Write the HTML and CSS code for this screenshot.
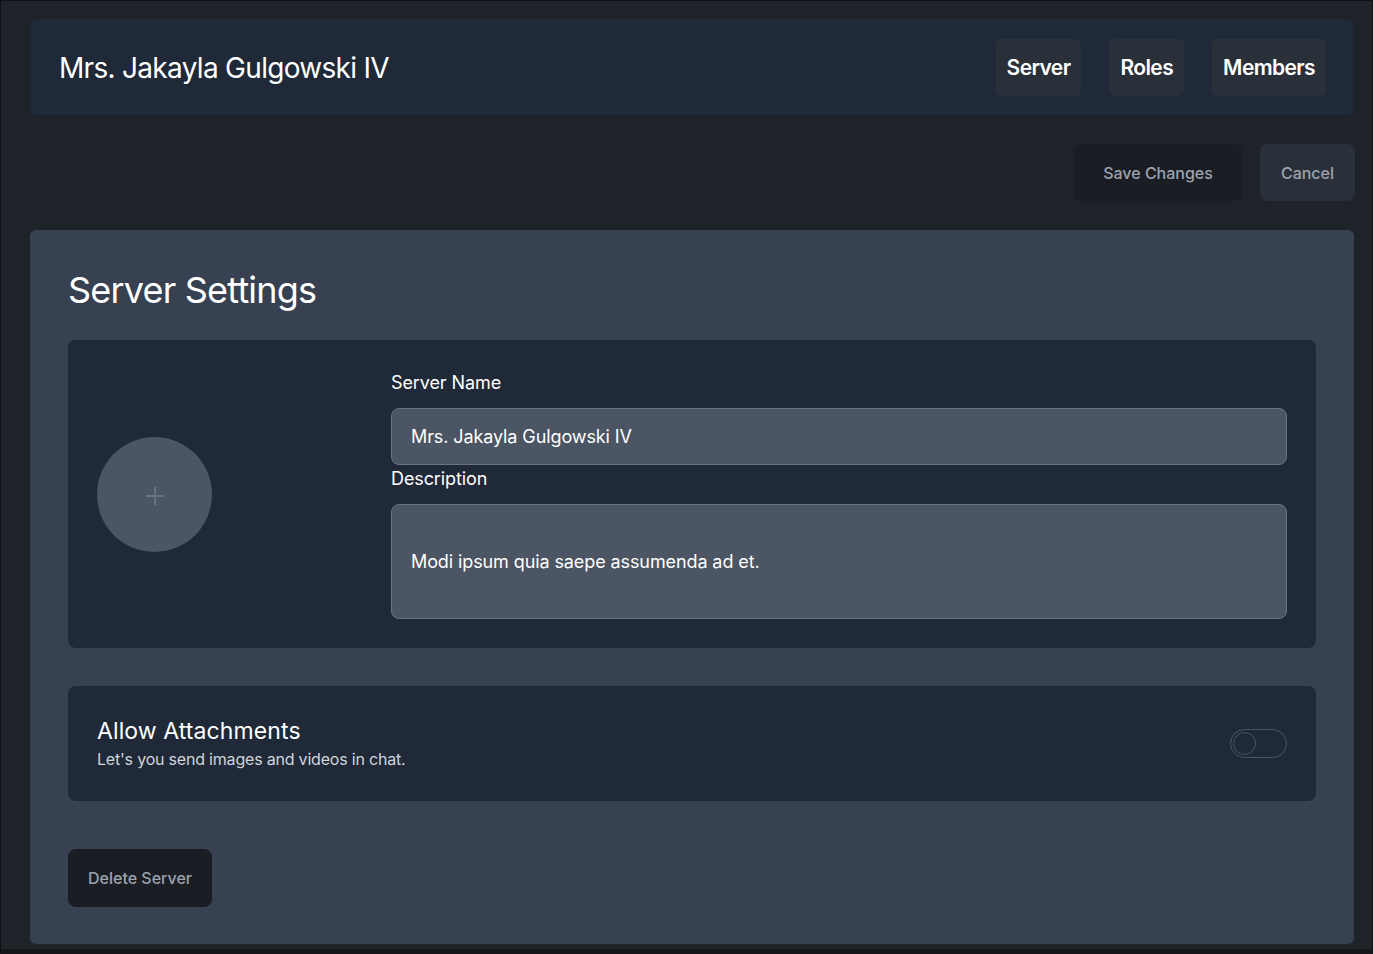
FILE: index.html
```html
<!DOCTYPE html>
<html lang="en">
<head>
<meta charset="utf-8">
<title>Server Settings</title>
<link rel="stylesheet" href="styles.css">
</head>
<body>
<div class="frame">
  <header class="topbar">
    <h1 class="server-title">Mrs. Jakayla Gulgowski IV</h1>
    <nav class="tabs">
      <button class="tab">Server</button>
      <button class="tab">Roles</button>
      <button class="tab">Members</button>
    </nav>
  </header>

  <div class="actions">
    <button class="btn btn-dark">Save Changes</button>
    <button class="btn btn-gray">Cancel</button>
  </div>

  <main class="settings">
    <h2 class="settings-title">Server Settings</h2>

    <section class="panel identity">
      <div class="avatar-col">
        <div class="avatar">
          <svg class="plus" width="20" height="20" viewBox="0 0 20 20" aria-hidden="true">
            <path d="M10 1v18M1 10h18" stroke="#6b7280" stroke-width="2" fill="none"/>
          </svg>
        </div>
      </div>
      <div class="form-col">
        <label class="label">Server Name</label>
        <div class="input">Mrs. Jakayla Gulgowski IV</div>
        <label class="label">Description</label>
        <div class="input textarea">Modi ipsum quia saepe assumenda ad et.</div>
      </div>
    </section>

    <section class="panel option">
      <div class="option-text">
        <div class="option-title">Allow Attachments</div>
        <div class="option-sub">Let's you send images and videos in chat.</div>
      </div>
      <div class="toggle"><span class="knob"></span></div>
    </section>

    <button class="btn btn-dark delete">Delete Server</button>
  </main>
</div>
</body>
</html>
```

FILE: styles.css
```css
* { box-sizing: border-box; }
html, body { margin: 0; padding: 0; }
body {
  background: #1e2229;
  font-family: "Inter", "Lato", sans-serif;
  color: #fff;
}
.frame {
  min-height: 954px;
  border: 1px solid #0e1013;
  border-bottom: 5px solid #141619;
  padding: 18px 18px 4px 29px;
}
.topbar {
  background: #1f2937;
  border-radius: 6px;
  display: flex;
  align-items: center;
  justify-content: space-between;
  padding: 20px 28px 19px 29px;
}
.server-title {
  margin: 0;
  font-size: 28px;
  font-weight: 400;
  letter-spacing: -0.7px;
}
.tabs { display: flex; gap: 28px; }
.tab {
  font-family: inherit;
  background: #2a3039;
  color: #fff;
  border: 0;
  border-radius: 6px;
  height: 57px;
  padding: 0 11px;
  font-size: 21px;
  font-weight: 600;
  letter-spacing: -0.6px;
}
.actions {
  display: flex;
  justify-content: flex-end;
  gap: 18px;
  margin: 29px -1px 29px 0;
}
.btn {
  font-family: inherit;
  border: 0;
  border-radius: 8px;
  height: 57px;
  font-size: 16px;
  font-weight: 500;
  color: #9ca3af;
}
.btn-dark { background: #1a1d23; padding: 0 29px; }
.btn-gray { background: #2a3039; padding: 0 21px; }
.settings {
  background: #374151;
  border-radius: 6px;
  padding: 40px 38px 37px;
}
.settings-title {
  margin: 0 0 30px;
  font-size: 36px;
  font-weight: 400;
  line-height: 40px;
  letter-spacing: -0.8px;
}
.panel {
  background: #1f2937;
  border-radius: 8px;
  padding: 29px;
}
.identity {
  display: grid;
  grid-template-columns: 294px 1fr;
  align-items: center;
}
.avatar {
  width: 115px;
  height: 115px;
  border-radius: 50%;
  background: #4b5563;
  display: flex;
  align-items: center;
  justify-content: center;
}
.plus { display: block; margin-top: 3px; }
.form-col { display: flex; flex-direction: column; }
.label {
  font-size: 18px;
  line-height: 28px;
  padding-bottom: 11px;
  letter-spacing: -0.1px;
}
.input {
  background: #4b5563;
  border: 1px solid #6b7280;
  border-radius: 8px;
  height: 57px;
  padding: 0 19px;
  display: flex;
  align-items: center;
  font-size: 18px;
  letter-spacing: -0.1px;
}
.textarea { height: 115px; }
.option {
  margin-top: 38px;
  height: 115px;
  display: flex;
  align-items: center;
  justify-content: space-between;
}
.option-title { font-size: 23px; line-height: 28px; margin-top: 1px; letter-spacing: 0.1px; }
.option-sub { font-size: 16px; color: #d1d5db; margin-top: 2px; line-height: 24px; letter-spacing: -0.2px; }
.toggle {
  width: 57px;
  height: 29px;
  border: 1px solid #4b5563;
  border-radius: 15px;
  display: flex;
  align-items: center;
  padding: 0 2px;
}
.knob {
  width: 23px;
  height: 23px;
  border: 1px solid #4b5563;
  border-radius: 50%;
}
.delete { margin-top: 48px; height: 58px; padding: 0 20px; }
```
